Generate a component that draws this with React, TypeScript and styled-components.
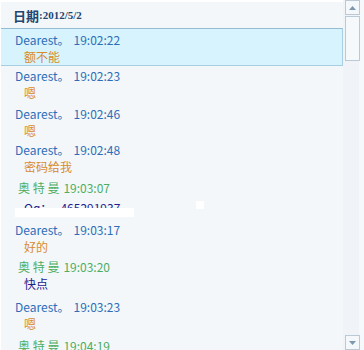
import * as React from 'react';
import styled, { createGlobalStyle } from 'styled-components';

const GlobalStyle = createGlobalStyle`
  html, body {
    margin: 0;
    padding: 0;
    width: 364px;
    height: 350px;
    overflow: hidden;
    background: #f3f7fa;
  }
`;

const Frame = styled.div`
  display: flex;
  width: 364px;
  height: 350px;
  overflow: hidden;
  background: #f3f7fa;
  font-family: 'Noto Sans CJK SC', 'Liberation Sans', sans-serif;
  font-size: 12px;
`;

const Log = styled.div`
  width: 343px;
  height: 350px;
  overflow: hidden;
  border-top: 2px solid #ffffff;
  border-left: 1px solid #ffffff;
  box-sizing: border-box;
`;

const DateHeader = styled.div`
  height: 26px;
  padding-left: 12px;
  display: flex;
  align-items: center;
  color: #25446e;
  font-weight: bold;
`;

const DateLabel = styled.span`
  font-size: 13px;
`;

const DateValue = styled.span`
  font-family: 'Liberation Serif', serif;
  font-size: 11px;
`;

const Entry = styled.div<{ $top: number; $selected?: boolean }>`
  position: relative;
  margin-top: ${(p) => p.$top}px;
  padding-top: ${(p) => (p.$selected ? 3 : 0)}px;
  height: ${(p) => (p.$selected ? 38 : 34)}px;
  background: ${(p) => (p.$selected ? '#d7f3fd' : 'transparent')};
  border: 1px solid ${(p) => (p.$selected ? '#a8cfe1' : 'transparent')};
  border-top-color: ${(p) => (p.$selected ? '#93bcd3' : 'transparent')};
  border-left: none;
  box-sizing: border-box;
`;

const Sender = styled.div<{ $tone: 'me' | 'peer' }>`
  height: 16px;
  line-height: 16px;
  white-space: pre;
  padding-left: ${(p) => (p.$tone === 'me' ? 14 : 17)}px;
  color: ${(p) => (p.$tone === 'me' ? '#2e6db8' : '#4cae62')};
`;

const Time = styled.span`
  margin-left: 4px;
`;

const Message = styled.div<{ $tone: 'orange' | 'navy'; $drop?: boolean }>`
  height: 18px;
  line-height: 18px;
  padding-left: 23px;
  padding-top: ${(p) => (p.$drop ? 3 : 0)}px;
  white-space: pre;
  color: ${(p) => (p.$tone === 'orange' ? '#d98b2b' : '#1d2190')};
`;

const Mask = styled.div`
  position: absolute;
  left: 14px;
  top: 28px;
  width: 119px;
  height: 9px;
  background: #ffffff;
`;

const MaskDot = styled.div`
  position: absolute;
  left: 195px;
  top: 21px;
  width: 8px;
  height: 8px;
  background: #ffffff;
`;

const ScrollBar = styled.div`
  width: 21px;
  height: 350px;
  display: flex;
  flex-direction: column;
  padding-left: 2px;
  box-sizing: border-box;
  background: linear-gradient(90deg, #f0f4f8 0, #f0f4f8 16px, #f6f9fb 16px);
`;

const ScrollButton = styled.div`
  width: 15px;
  height: 15px;
  border: 1px solid #bcc9d4;
  box-sizing: border-box;
  background: #f5f8fb;
  display: flex;
  align-items: center;
  justify-content: center;
`;

const Thumb = styled.div`
  width: 15px;
  height: 45px;
  margin-top: 1px;
  border: 1px solid #bcc9d4;
  box-sizing: border-box;
  background: #f6f9fc;
`;

const Track = styled.div`
  flex: 1;
`;

const Arrow = ({ down }: { down?: boolean }) => (
  <svg width="7" height="4" viewBox="0 0 7 4">
    <path d={down ? 'M0 0 L7 0 L3.5 4 Z' : 'M0 4 L7 4 L3.5 0 Z'} fill="#7d97ad" />
  </svg>
);

type Row = {
  who: 'me' | 'peer';
  time: string;
  text: string;
  tone: 'orange' | 'navy';
  top: number;
  selected?: boolean;
  masked?: boolean;
};

const rows: Row[] = [
  { who: 'me', time: '19:02:22', text: '额不能', tone: 'orange', top: 0, selected: true },
  { who: 'me', time: '19:02:23', text: '嗯', tone: 'orange', top: 1 },
  { who: 'me', time: '19:02:46', text: '嗯', tone: 'orange', top: 4 },
  { who: 'me', time: '19:02:48', text: '密码给我', tone: 'orange', top: 2 },
  { who: 'peer', time: '19:03:07', text: 'Qq：   465291937', tone: 'navy', top: 4, masked: true },
  { who: 'me', time: '19:03:17', text: '好的', tone: 'orange', top: 8 },
  { who: 'peer', time: '19:03:20', text: '快点', tone: 'navy', top: 3 },
  { who: 'me', time: '19:03:23', text: '嗯', tone: 'orange', top: 6 },
  { who: 'peer', time: '19:04:19', text: '', tone: 'navy', top: 5 },
];

export default function App() {
  return (
    <>
      <GlobalStyle />
      <Frame>
        <Log>
          <DateHeader>
            <DateLabel>日期</DateLabel>
            <DateValue>:2012/5/2</DateValue>
          </DateHeader>
          {rows.map((r, i) => (
            <Entry key={i} $top={r.top} $selected={r.selected}>
              <Sender $tone={r.who}>
                {r.who === 'me' ? 'Dearest。' : '奥 特 曼'}
                <Time>{r.time}</Time>
              </Sender>
              <Message $tone={r.tone} $drop={r.masked}>
                {r.text}
              </Message>
              {r.masked && (
                <>
                  <Mask />
                  <MaskDot />
                </>
              )}
            </Entry>
          ))}
        </Log>
        <ScrollBar>
          <ScrollButton>
            <Arrow />
          </ScrollButton>
          <Thumb />
          <Track />
          <ScrollButton>
            <Arrow down />
          </ScrollButton>
        </ScrollBar>
      </Frame>
    </>
  );
}
